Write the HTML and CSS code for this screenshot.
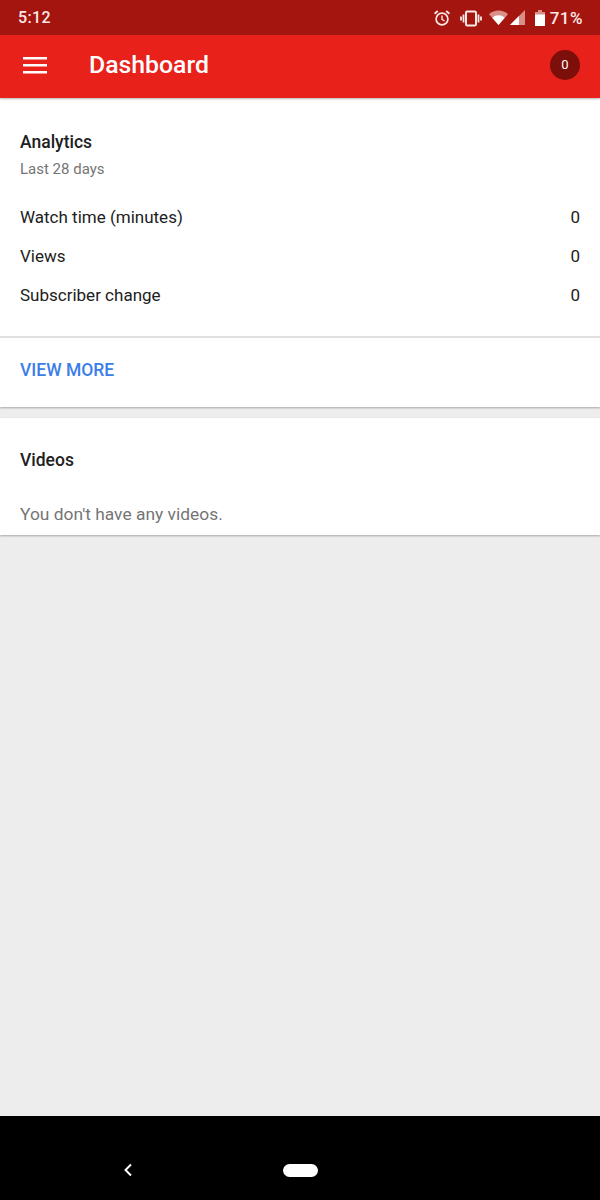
FILE: index.html
```
<!DOCTYPE html>
<html lang="en">
<head>
<meta charset="utf-8">
<title>Dashboard</title>
<link rel="stylesheet" href="styles.css">
</head>
<body>
<div class="phone">
  <div class="status">
    <span class="time">5:12</span>
    <div class="status-icons">
      <svg class="ic-alarm" width="18" height="18" viewBox="0 0 18 18" fill="none" stroke="#fbe9e7"><circle cx="9" cy="10" r="5.9" stroke-width="1.7"/><path d="M9 6.500V10.300L11.600 12" stroke-width="1.400"/><path d="M1.600 4.800L4.800 2.100M16.400 4.800L13.200 2.100" stroke-width="1.900"/></svg>
      <svg class="ic-vib" width="22" height="18" viewBox="0 0 22 18" fill="none" stroke="#fbe9e7"><rect x="6" y="2.500" width="10" height="14" rx="1.300" stroke-width="2"/><path d="M3.500 5.500V13.500M18.500 5.500V13.500" stroke-width="1.800"/><path d="M1 7.500V11.500M21 7.500V11.500" stroke-width="1.800"/></svg>
      <svg class="ic-wifi" width="19" height="15" viewBox="0 0 19 15"><path d="M0 4.200A14 14 0 0 1 19 4.200L9.500 15Z" fill="#d88f88"/><path d="M3.300 7.800A9 9 0 0 1 15.700 7.800L9.500 15Z" fill="#fff"/></svg>
      <svg class="ic-signal" width="15" height="15" viewBox="0 0 15 15"><path d="M0 15L15 0V15Z" fill="#d88f88"/><path d="M0 15L9 6V15Z" fill="#fff"/></svg>
      <svg class="ic-batt" width="10" height="16" viewBox="0 0 10 16"><path d="M3 0H7V2H10V16H0V2H3Z" fill="#d88f88"/><path d="M0 4.500H10V16H0Z" fill="#fff"/></svg>
      <span class="pct">71%</span>
    </div>
  </div>
  <header class="appbar">
    <svg class="menu" width="24" height="18" viewBox="0 0 24 18" fill="#fff"><rect y="1" width="24" height="2.500"/><rect y="8" width="24" height="2.500"/><rect y="15" width="24" height="2.500"/></svg>
    <h1 class="title">Dashboard</h1>
    <span class="badge">0</span>
  </header>
  <main class="content">
    <section class="card analytics">
      <h2 class="card-title">Analytics</h2>
      <p class="sub">Last 28 days</p>
      <ul class="rows">
        <li class="row"><span>Watch time (minutes)</span><span>0</span></li>
        <li class="row"><span>Views</span><span>0</span></li>
        <li class="row"><span>Subscriber change</span><span>0</span></li>
      </ul>
      <div class="more"><a class="more-link">VIEW MORE</a></div>
    </section>
    <section class="card videos">
      <h2 class="card-title">Videos</h2>
      <p class="empty">You don't have any videos.</p>
    </section>
  </main>
  <nav class="navbar">
    <svg class="back" width="10" height="14" viewBox="0 0 10 14" fill="none" stroke="#fff" stroke-width="2"><path d="M8 1.500L2.500 7L8 12.500"/></svg>
    <span class="home"></span>
  </nav>
</div>
</body>
</html>
```
FILE: styles.css
```
* { box-sizing: border-box; }
html, body { margin: 0; padding: 0; }
body { font-family: Roboto, "Liberation Sans", sans-serif; background: #ededed; }
.phone { width: 600px; height: 1200px; display: flex; flex-direction: column; overflow: hidden; }

.status { height: 35px; flex: none; background: #a3150e; display: flex; align-items: center; justify-content: space-between; padding: 0 17px 0 18px; color: #fbe9e7; }
.time { font-size: 16px; font-weight: 500; letter-spacing: 0.4px; }
.status-icons { display: flex; align-items: center; }
.ic-alarm { margin-right: 9px; }
.ic-vib { margin-right: 7px; }
.ic-signal { margin-left: 2px; margin-right: 10px; }
.ic-batt { margin-right: 5px; }
.pct { font-size: 17px; font-weight: 500; letter-spacing: 0.5px; }

.appbar { height: 63px; flex: none; background: #e8211a; display: flex; align-items: center; padding: 0 20px 4px 23px; box-shadow: 0 1px 2px rgba(0,0,0,0.3); position: relative; }
.title { margin: 0 0 0 42px; flex: 1; font-size: 24.800px; font-weight: 500; color: #fff; }
.badge { width: 30px; height: 30px; border-radius: 50%; background: #7c0f0a; color: #fff; font-size: 13px; display: flex; align-items: center; justify-content: center; }

.content { flex: 1; min-height: 0; }
.card { background: #fff; box-shadow: 0 1px 2px rgba(0,0,0,0.3); }
.analytics { height: 309px; padding-top: 34px; }
.card-title { margin: 0; padding: 0 20px; font-size: 17.500px; line-height: 20px; font-weight: 500; color: #212121; }
.sub { margin: 8px 0 0; padding: 0 20px; font-size: 15px; line-height: 18px; color: #757575; }
.rows { list-style: none; margin: 19px 0 0; padding: 0 20px; height: 139px; }
.row { height: 39px; display: flex; justify-content: space-between; align-items: center; font-size: 17px; color: #212121; }
.more { border-top: 2px solid #e0e0e0; height: 71px; padding: 0 20px 6px; display: flex; align-items: center; }
.more-link { font-size: 17.500px; font-weight: 500; color: #3b7ee8; }

.videos { margin-top: 11px; height: 117px; padding-top: 32px; }
.empty { margin: 34px 0 0; padding: 0 20px; font-size: 17.400px; line-height: 20px; color: #757575; }

.navbar { height: 84px; flex: none; background: #000; position: relative; }
.back { position: absolute; left: 123px; top: 47px; }
.home { position: absolute; left: 283px; top: 48px; width: 35px; height: 13px; border-radius: 7px; background: #fff; }
```
